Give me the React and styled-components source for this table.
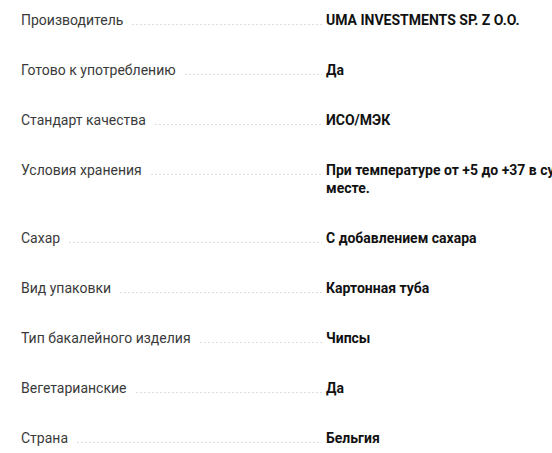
import React from "react";
import styled, { createGlobalStyle } from "styled-components";

const Global = createGlobalStyle`
  html, body {
    margin: 0;
    padding: 0;
    background: #ffffff;
    overflow: hidden;
  }
  body {
    font-family: Roboto, "Noto Sans", Arial, sans-serif;
  }
`;

const List = styled.dl`
  margin: 0;
  padding: 11px 0 0 21px;
  display: flex;
  flex-direction: column;
  gap: 32px;
  width: 620px;
`;

const Row = styled.div`
  display: grid;
  grid-template-columns: 301px 290px;
  column-gap: 4px;
  font-size: 14px;
  line-height: 18px;
`;

const Term = styled.dt`
  display: flex;
  align-items: flex-start;
  color: #3a3a3a;
  font-weight: 400;
  margin: 0;
`;

const Dots = styled.span`
  flex: 1;
  height: 14px;
  margin: 0 0 0 9px;
  background-image: linear-gradient(to right, #dedede 50%, transparent 50%);
  background-size: 4px 1px;
  background-repeat: repeat-x;
  background-position: left bottom;
`;

const Value = styled.dd`
  margin: 0;
  color: #111111;
  font-weight: 700;
`;

const items = [
  ["Производитель", "UMA INVESTMENTS SP. Z O.O."],
  ["Готово к употреблению", "Да"],
  ["Стандарт качества", "ИСО/МЭК"],
  ["Условия хранения", "При температуре от +5 до +37 в сухом месте."],
  ["Сахар", "С добавлением сахара"],
  ["Вид упаковки", "Картонная туба"],
  ["Тип бакалейного изделия", "Чипсы"],
  ["Вегетарианские", "Да"],
  ["Страна", "Бельгия"],
];

export default function App() {
  return (
    <>
      <Global />
      <List>
        {items.map(([k, v]) => (
          <Row key={k}>
            <Term>
              {k}
              <Dots />
            </Term>
            <Value>{v}</Value>
          </Row>
        ))}
      </List>
    </>
  );
}
